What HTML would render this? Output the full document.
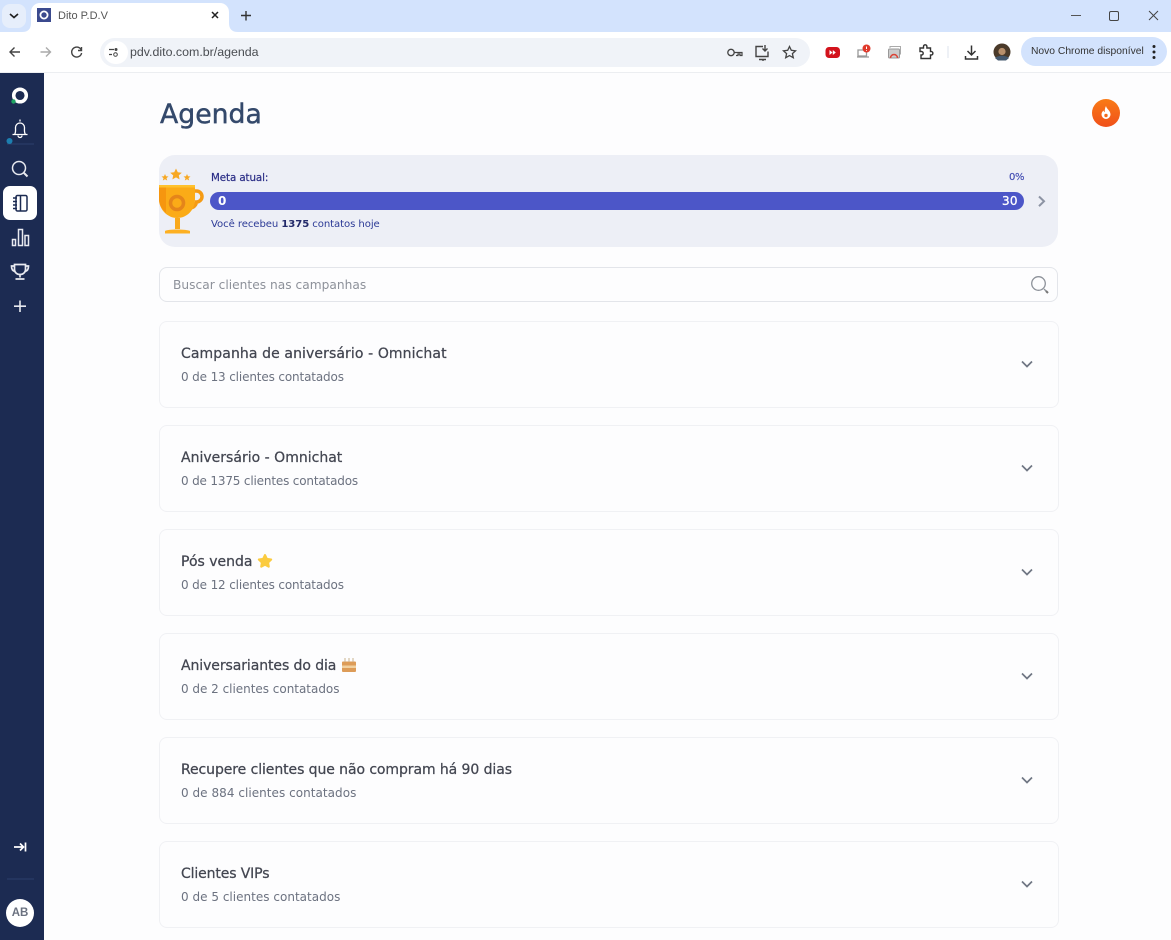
<!DOCTYPE html>
<html lang="pt-BR"><head><meta charset="utf-8"><title>Dito P.D.V</title>
<style>
*{box-sizing:border-box}
html,body{margin:0;padding:0;width:1171px;height:940px;overflow:hidden;background:#fdfdfe;font-family:"DejaVu Sans",sans-serif}
.a{position:absolute}
svg{position:absolute;overflow:visible}
.ch{font-family:"Liberation Sans",sans-serif}
.card{position:absolute;left:159px;width:900px;height:87px;border:1px solid #f0f1f4;border-radius:8px;background:#fdfdfe}
.t{position:absolute;left:21px;top:23px;font-size:14px;line-height:18px;color:#434651;white-space:nowrap;letter-spacing:.1px;-webkit-text-stroke:.25px #434651}
.s{position:absolute;left:21px;top:47px;font-size:12px;line-height:16px;color:#6c7280;white-space:nowrap;letter-spacing:-.1px}
</style></head><body>

<!-- Chrome tab strip -->
<div class="a" style="left:0;top:0;width:1171px;height:32px;background:#d3e3fd"></div>
<div class="a" style="left:2px;top:4px;width:24px;height:24px;border-radius:8px;background:#e6eefb"></div>
<svg style="left:0;top:0" width="1171" height="72" fill="none">
<path d="M10 14l4 3.500 4-3.500" stroke="#1f1f1f" stroke-width="1.600"/>
<path d="M22 32c6 0 9-3 9-9V12a9 9 0 0 1 9-9h180a9 9 0 0 1 9 9v11c0 6 3 9 9 9z" fill="#fff"/>
<rect x="37" y="8" width="14" height="14" fill="#3b4a8e"/><circle cx="44" cy="15" r="3.600" stroke="#fff" stroke-width="1.800"/>
<path d="M212 12l6 6m0-6l-6 6" stroke="#222" stroke-width="1.500"/>
<path d="M246 11v9.500M241 15.500h10" stroke="#333" stroke-width="1.400"/>
<path d="M1071 15.500h10" stroke="#555" stroke-width="1"/>
<rect x="1109.500" y="11.500" width="9" height="9" rx="1.500" stroke="#444" stroke-width="1"/>
<path d="M1149 11l9 9m0-9l-9 9" stroke="#444" stroke-width="1"/>
</svg>
<div class="a ch" style="left:58px;top:9px;font-size:11px;line-height:14px;color:#555">Dito P.D.V</div>

<!-- Toolbar -->
<div class="a" style="left:0;top:32px;width:1171px;height:41px;background:#fff;border-bottom:1px solid #eceef1"></div>
<div class="a" style="left:100px;top:38px;width:710px;height:29px;border-radius:15px;background:#f0f3f8"></div>
<div class="a" style="left:104px;top:41px;width:24px;height:23px;border-radius:12px;background:#fff"></div>
<div class="a ch" style="left:130px;top:45px;font-size:12.400px;line-height:15px;color:#4a4d52">pdv.dito.com.br/agenda</div>
<svg style="left:0;top:0" width="1171" height="72" fill="none">
<path d="M20 52h-9.500m4-4.500l-4.500 4.500 4.500 4.500" stroke="#444" stroke-width="1.400"/>
<path d="M50 52h-9.500m5.500-4.500l4.500 4.500-4.500 4.500" stroke="#aaa" stroke-width="1.400"/>
<path d="M81 49.500a5 5 0 1 0 .600 3.500M81.500 47v3.500h-3.500" stroke="#444" stroke-width="1.400"/>
<path d="M109 49.500h5M109 54.500h3" stroke="#444" stroke-width="1.200"/><circle cx="116" cy="49.500" r="1.500" fill="#444"/><circle cx="115.500" cy="54.500" r="1.800" stroke="#444"/>
<circle cx="731" cy="52.500" r="3.200" stroke="#444" stroke-width="1.300"/><path d="M734 52.500h8v3h-2v-1.500h-2v1.500h-2" stroke="#444" stroke-width="1.200"/>
<path d="M763 46.500h-7v10h12v-5M762 60h2M759 59.500h7M765 45v6m-2.500-2.500l2.500 2.500 2.500-2.500" stroke="#444" stroke-width="1.400"/>
<path d="M789.500 46.500l1.800 3.800 4.200.500-3.100 2.800.900 4.100-3.800-2.100-3.800 2.100.900-4.100-3.100-2.800 4.200-.500z" stroke="#444" stroke-width="1.300"/>
<rect x="825.500" y="47" width="14.500" height="11" rx="3.500" fill="#d3131c"/><path d="M829.500 50v5l3-2.500zM832.800 50v5l3-2.500z" fill="#fff"/>
<path d="M858 50h8.500v6h-8.500zM857 57h12" stroke="#999" stroke-width="1.300"/><circle cx="866.500" cy="48.500" r="4" fill="#e0392b"/><path d="M866.500 46.500v2.500M866.500 50v.7" stroke="#fff"/>
<rect x="888.500" y="49" width="11" height="9" rx="1" fill="#ccc" stroke="#999"/><path d="M890 48v-1.500h10.500v8" stroke="#aaa"/><path d="M890.500 58a3.500 3.500 0 0 1 7 0" stroke="#db4437" stroke-width="1.500"/>
<path d="M920 48h3.500v-1.500a1.700 1.700 0 0 1 3.400 0V48h3.600v3.500h1a1.800 1.800 0 0 1 0 3.500h-1v3.500h-9.500V55h.8a1.800 1.800 0 0 0 0-3.500H920z" stroke="#333" stroke-width="1.400"/>
<path d="M948 46v12" stroke="#dde3ec"/>
<path d="M971.500 45.500v9m-4-3.500l4 4 4-4M965.500 56v3h12v-3" stroke="#333" stroke-width="1.500"/>
<circle cx="1002" cy="52" r="8.500" fill="#4a3a2a"/><circle cx="1002" cy="51.500" r="3.600" fill="#b8906c"/><path d="M995 58c3-3 11-3 14 0l-3 2.500h-8z" fill="#44586e"/>
</svg>
<div class="a" style="left:1021px;top:37px;width:146px;height:29px;border-radius:15px;background:#d3e3fd"></div>
<div class="a ch" style="left:1031px;top:45px;font-size:10.300px;line-height:14px;color:#333">Novo Chrome disponível</div>
<svg style="left:1151px;top:44px" width="6" height="16"><circle cx="3" cy="2.500" r="1.500" fill="#222"/><circle cx="3" cy="8" r="1.500" fill="#222"/><circle cx="3" cy="13.500" r="1.500" fill="#222"/></svg>

<!-- Sidebar -->
<div class="a" style="left:0;top:73px;width:44px;height:867px;background:#1c2b52"></div>
<div class="a" style="left:3px;top:186px;width:34px;height:34px;border-radius:7px;background:#fff"></div>
<svg style="left:0;top:73px" width="44" height="867" fill="none">
<circle cx="20" cy="22.500" r="6.300" stroke="#fff" stroke-width="3.500"/><circle cx="13.500" cy="28.500" r="2.200" fill="#1fa463"/>
<path d="M20 46.500v2M14.500 61.500c1.500-2 1-4 1-7a4.500 4.500 0 0 1 9 0c0 3-.500 5 1 7zM12.500 61.500h15M18 62.500a2 2 0 0 0 4 0" stroke="#fff" stroke-width="1.300"/>
<path d="M7 71h27" stroke="#2c3f6c"/><circle cx="9.500" cy="68" r="3" fill="#1c7fb0"/>
<circle cx="19" cy="95" r="6.500" stroke="#e8eaf0" stroke-width="1.500"/><path d="M24 100l3.500 3.500" stroke="#e8eaf0" stroke-width="2"/>
<rect x="16" y="122.500" width="11" height="15.500" rx="1.500" stroke="#1c2b52" stroke-width="1.500"/><path d="M20.500 122.500v15.500M13 125h4M13 128.500h4M13 132h4M13 135.500h4" stroke="#1c2b52" stroke-width="1.500"/>
<path d="M12.500 166.500h3v6h-3zM18.500 156.500h4v16h-4zM25 162.500h3.500v10H25z" stroke="#e8eaf0" stroke-width="1.500"/>
<path d="M14.500 191.500h11v5c0 3-2.500 5-5.500 5s-5.500-2-5.500-5zM14.500 193h-3c0 3 1 5 3.500 5.500M25.500 193h3c0 3-1 5-3.500 5.500M20 201.500v3M15.500 206h9" stroke="#e8eaf0" stroke-width="1.700"/>
<path d="M20 227.500v11.500M14 233.200h12" stroke="#e8eaf0" stroke-width="1.600"/>
<path d="M14 774h9m-3-3.500l3.500 3.500-3.500 3.500M25.500 769.500v9" stroke="#fff" stroke-width="1.700"/>
<path d="M7 806h27" stroke="#2c3f6c"/>
</svg>
<div class="a ch" style="left:6px;top:899px;width:28px;height:28px;border-radius:50%;background:#fff;color:#6b7280;font-size:11.500px;font-weight:bold;line-height:28px;text-align:center">AB</div>

<!-- Heading -->
<div class="a" style="left:160px;top:98px;font-size:26.700px;line-height:34px;color:#34496b;-webkit-text-stroke:.45px #34496b">Agenda</div>
<svg style="left:1091px;top:98px" width="30" height="30">
<defs><linearGradient id="f" x1="0" y1="0" x2="0" y2="1"><stop offset="0" stop-color="#f97b16"/><stop offset="1" stop-color="#f0501a"/></linearGradient></defs>
<circle cx="15" cy="15" r="14" fill="url(#f)"/><path d="M15 8c.5 3 4.500 4.500 4.500 8.500a4.500 4.500 0 0 1-9 0c0-2 1-3 2-4 .2 1 .600 1.500 1.200 1.800 0-2.500.2-4.300 1.300-6.300z" fill="#fff"/><circle cx="15" cy="17.500" r="1.700" fill="#f3691a"/>
</svg>

<!-- Goal box -->
<div class="a" style="left:159px;top:155px;width:899px;height:92px;border-radius:16px;background:#edeff6"></div>
<svg style="left:155px;top:160px" width="60" height="80">
<path d="M10 14l1 2.300 2.500.2-2 1.600.700 2.400-2.200-1.300-2.200 1.300.700-2.400-2-1.600 2.500-.2zM32 14l1 2.300 2.500.2-2 1.600.700 2.400-2.200-1.300-2.200 1.300.700-2.400-2-1.600 2.500-.2z" fill="#f7a823"/>
<path d="M21 8.500l1.800 3.700 4 .500-3 2.700.800 4-3.600-2-3.600 2 .800-4-3-2.700 4-.500z" fill="#f7a823"/>
<path d="M39 31h2.500a5.500 5.500 0 0 1 0 11 7 7 0 0 1-6 6" fill="none" stroke="#f59b14" stroke-width="3.500"/>
<path d="M4 25h36v14c0 11-8 19-18 19C13 58 4 50 4 39z" fill="#fbab17"/><path d="M4 25h7v28C7 49 4 45 4 39z" fill="#f6960f"/><path d="M4 25h36v2.500H4z" fill="#ffc22d"/>
<circle cx="22" cy="43" r="6.500" fill="none" stroke="#e5851a" stroke-width="3.500"/>
<path d="M20 58h5v11h-5z" fill="#f9a91b"/><path d="M10 71c2-2 22-2 25 0v2.500H10z" fill="#fdb022"/>
</svg>
<div class="a" style="left:211px;top:171px;font-size:10.300px;line-height:14px;color:#2c2f87;letter-spacing:-.1px;-webkit-text-stroke:.2px #2c2f87">Meta atual:</div>
<div class="a" style="left:1009px;top:171px;font-size:10px;line-height:14px;color:#4650b4;letter-spacing:-.3px;-webkit-text-stroke:.2px #4650b4">0%</div>
<div class="a" style="left:210px;top:192px;width:814px;height:18px;border-radius:9px;background:#4c56c8"></div>
<div class="a" style="left:218px;top:193px;font-size:12px;line-height:16px;color:#fff;font-weight:bold">0</div>
<div class="a" style="left:1002px;top:193px;font-size:12px;line-height:16px;color:#fff;letter-spacing:.2px;-webkit-text-stroke:.3px #fff">30</div>
<svg style="left:1035px;top:194px" width="14" height="14" fill="none"><path d="M4 2.500l5 4.800-5 4.800" stroke="#8c93a3" stroke-width="2"/></svg>
<div class="a" style="left:211px;top:217px;font-size:10.100px;line-height:15px;color:#2c3a96;white-space:nowrap;letter-spacing:-.08px">Você recebeu <b style="color:#232a6a">1375</b> contatos hoje</div>

<!-- Search -->
<div class="a" style="left:159px;top:267px;width:899px;height:35px;border:1px solid #e3e5ea;border-radius:8px;background:#fdfdfe"></div>
<div class="a" style="left:173px;top:277px;font-size:12.200px;line-height:16px;color:#8d919a;letter-spacing:.02px">Buscar clientes nas campanhas</div>
<svg style="left:1029px;top:274px" width="22" height="22" fill="none"><circle cx="9.500" cy="9.500" r="6.800" stroke="#8d929a" stroke-width="1.300"/><path d="M15 15l2.500 2.500" stroke="#8d929a" stroke-width="1.300"/><path d="M17 17l2 2" stroke="#777" stroke-width="2"/></svg>

<!-- Cards -->
<div class="card" style="top:321px"><div class="t">Campanha de aniversário - Omnichat</div><div class="s" style="letter-spacing:-.14px">0 de 13 clientes contatados</div></div>
<div class="card" style="top:425px"><div class="t" style="letter-spacing:.01px">Aniversário - Omnichat</div><div class="s" style="letter-spacing:-.17px">0 de 1375 clientes contatados</div></div>
<div class="card" style="top:529px"><div class="t" style="letter-spacing:0">Pós venda</div><div class="s" style="letter-spacing:-.14px">0 de 12 clientes contatados</div></div>
<div class="card" style="top:633px"><div class="t" style="letter-spacing:-.08px">Aniversariantes do dia</div><div class="s" style="letter-spacing:-.02px">0 de 2 clientes contatados</div></div>
<div class="card" style="top:737px"><div class="t" style="letter-spacing:-.08px">Recupere clientes que não compram há 90 dias</div><div class="s" style="letter-spacing:.04px">0 de 884 clientes contatados</div></div>
<div class="card" style="top:841px"><div class="t" style="letter-spacing:-.13px">Clientes VIPs</div><div class="s" style="letter-spacing:.015px">0 de 5 clientes contatados</div></div>
<svg style="left:0;top:0" width="1171" height="940" fill="none">
<g stroke="#6f7683" stroke-width="1.700">
<path d="M1022 361.500l5 5 5-5"/><path d="M1022 465.500l5 5 5-5"/><path d="M1022 569.500l5 5 5-5"/><path d="M1022 673.500l5 5 5-5"/><path d="M1022 777.500l5 5 5-5"/><path d="M1022 881.500l5 5 5-5"/>
</g>
<path d="M265 555l1.900 3.900 4.300.600-3.100 3 .700 4.200-3.800-2-3.800 2 .700-4.200-3.100-3 4.300-.600z" fill="#fbcb3f" stroke="#fbcb3f" stroke-width="2" stroke-linejoin="round"/>
<rect x="342" y="661.500" width="14" height="10.500" rx="1" fill="#dd9c58"/><rect x="342" y="665.500" width="14" height="2.500" fill="#f1d1a0"/><path d="M345 658v4M349 658v4M353 658v4" stroke="#c9b28f"/>
</svg>
</body></html>
